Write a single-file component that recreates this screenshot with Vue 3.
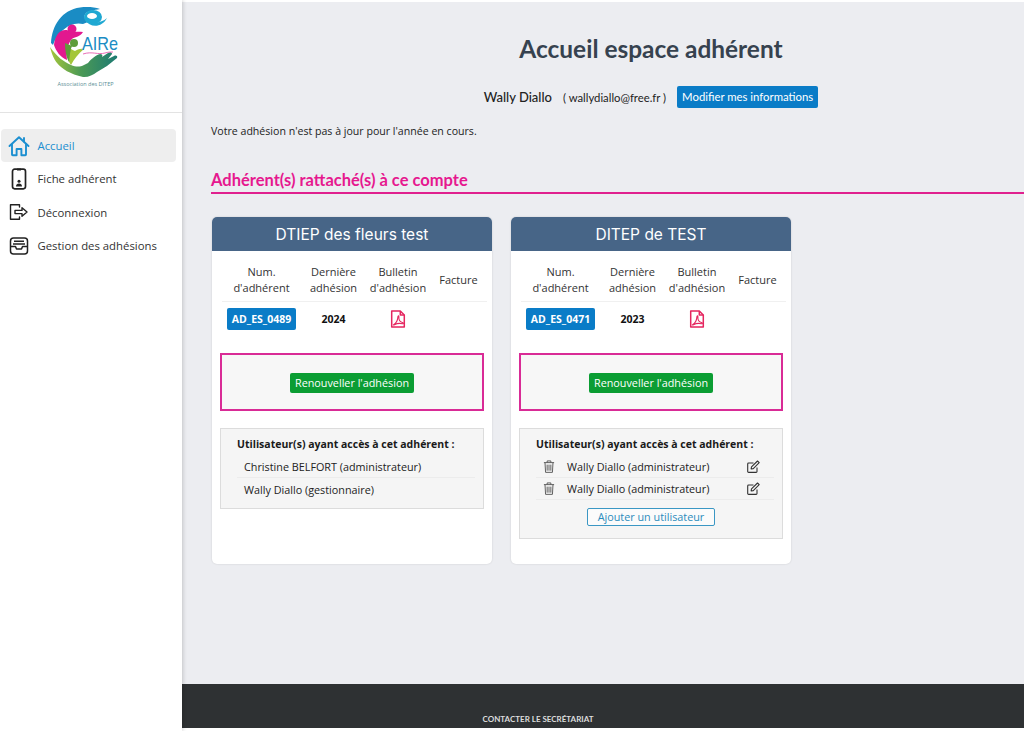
<script setup>
const menu = [
  { label: 'Accueil', icon: 'home', active: true },
  { label: 'Fiche adhérent', icon: 'phone' },
  { label: 'Déconnexion', icon: 'logout' },
  { label: 'Gestion des adhésions', icon: 'inbox' }
]

const cards = [
  {
    title: 'DTIEP des fleurs test',
    num: 'AD_ES_0489',
    year: '2024',
    editable: false,
    users: ['Christine BELFORT (administrateur)', 'Wally Diallo (gestionnaire)']
  },
  {
    title: 'DITEP de TEST',
    num: 'AD_ES_0471',
    year: '2023',
    editable: true,
    users: ['Wally Diallo (administrateur)', 'Wally Diallo (administrateur)']
  }
]
</script>

<template>
  <div class="page">
    <aside class="sidebar">
      <div class="logo-zone">
        <svg class="logo" width="78" height="75" viewBox="0 0 78 75">
          <defs>
            <linearGradient id="hand" x1="0" y1="0" x2="1" y2="0">
              <stop offset="0" stop-color="#a5c63b" />
              <stop offset="0.45" stop-color="#4c9a55" />
              <stop offset="1" stop-color="#1d7a72" />
            </linearGradient>
          </defs>
          <path d="M1 38C2 20 12 5 30 2.500C37 1.500 44 2 50 4C44 5 38 6 36 8C33 11 35 15 38 17L33 19C26 17 18 20 12 26C8 30 5 34 3 40Z" fill="#1a8cc4" />
          <ellipse cx="43" cy="12" rx="9" ry="7" fill="#1fa8d2" />
          <ellipse cx="42" cy="11" rx="5" ry="3" fill="#fff" />
          <path d="M35 15C40 23 52 23 57 13C52 18 42 19 35 15Z" fill="#1fa8d2" />
          <path d="M4 40C5 30 10 24 17 25C22 28 27 26 33 27C30 32 24 32 22 34C18 38 16 46 17 55C10 52 6 46 4 40Z" fill="#e2188f" />
          <circle cx="22" cy="24" r="4.500" fill="#e2188f" />
          <path d="M17 40C16 46 17 54 21 60C24 54 28 49 34 44C30 43 27 45 25 46C22 45 19 43 17 40Z" fill="#a4c639" />
          <path d="M15 38C15 44 16 52 19 57C20 50 20 45 22 41Z" fill="#5f9c3a" />
          <circle cx="24" cy="38" r="4" fill="#5f9c3a" />
          <path d="M0 42C2 50 4 54 7 58C12 64 20 69 33 72C38 72.500 43 70 47 67L57 61L67 53C68 51 66 50 64 51L58 54L62 49C62 47 60 47 58 48L52 52C53 50 52 49 50 49C46 50 41 54 38 58L34 60C30 62 26 62 21 60C14 57 7 52 0 42Z" fill="url(#hand)" />
          <path d="M33 49C42 46 48 50 55 48C58 47 60 47 63 47" fill="none" stroke="#e96fb7" stroke-width="1" />
          <text x="32" y="45" class="logo-txt" textLength="36" lengthAdjust="spacingAndGlyphs">AIRe</text>
        </svg>
        <div class="logo-sub">Association des DITEP</div>
      </div>
      <nav class="menu">
        <a v-for="item in menu" :key="item.label" class="menu-item" :class="{ active: item.active }">
          <span class="menu-icon">
            <svg v-if="item.icon === 'home'" width="22" height="22" viewBox="0 0 22 22" fill="none" stroke="currentColor" stroke-width="1.900" stroke-linejoin="round" stroke-linecap="round">
              <path d="M1.500 11 11 2.200 20.500 11" />
              <path d="M4 9.500V19.500c0 .4.300.7.700.7h3.900v-6.200h4.800v6.200h3.900c.4 0 .7-.3.700-.7V9.500" />
              <path d="M16 3v3.500" />
            </svg>
            <svg v-else-if="item.icon === 'phone'" width="20" height="22" viewBox="0 0 20 22" fill="none" stroke="#222" stroke-width="1.700">
              <rect x="3.500" y="1.200" width="13" height="19.600" rx="2.200" />
              <path d="M8 1.500h4" stroke-width="2" />
              <circle cx="10" cy="13.300" r="1.500" fill="#222" stroke="none" />
              <path d="M7 18.600c0-2 1.200-3.200 3-3.200s3 1.200 3 3.200z" fill="#222" stroke="none" />
            </svg>
            <svg v-else-if="item.icon === 'logout'" width="20" height="18" viewBox="0 0 20 18" fill="none" stroke="#222" stroke-width="1.400" stroke-linejoin="round" stroke-linecap="round">
              <path d="M10.500 4V1.800H1.500v14.400h9V14" />
              <path d="M6 7.400h7V4.700L18 9l-5 4.300v-2.700H6z" />
            </svg>
            <svg v-else width="20" height="18" viewBox="0 0 20 18" fill="none" stroke="#222" stroke-width="1.500" stroke-linejoin="round">
              <rect x="1.500" y="1" width="17" height="16" rx="3" />
              <path d="M1.500 9.500h5l1 2.500h5l1-2.500h5" />
              <path d="M5 4.300h10M4 7h12" />
            </svg>
          </span>
          <span>{{ item.label }}</span>
        </a>
      </nav>
    </aside>

    <div class="content">
      <main class="main">
        <h1 class="title">Accueil espace adhérent</h1>
        <div class="user-line">
          <span class="user-name">Wally Diallo</span>
          <span class="user-mail">( wallydiallo@free.fr )</span>
          <a class="btn-blue">Modifier mes informations</a>
        </div>
        <p class="notice">Votre adhésion n'est pas à jour pour l'année en cours.</p>
        <h2 class="section">Adhérent(s) rattaché(s) à ce compte</h2>

        <div class="cards">
          <section v-for="card in cards" :key="card.num" class="card">
            <header class="card-head">{{ card.title }}</header>
            <div class="card-body">
              <div class="table">
                <div class="cell th">Num.<br />d'adhérent</div>
                <div class="cell th">Dernière<br />adhésion</div>
                <div class="cell th">Bulletin<br />d'adhésion</div>
                <div class="cell th">Facture</div>
                <div class="cell td"><span class="badge">{{ card.num }}</span></div>
                <div class="cell td"><b class="year">{{ card.year }}</b></div>
                <div class="cell td">
                  <svg width="16" height="18" viewBox="0 0 16 18" fill="none" stroke="#e5265f" stroke-width="1.500" stroke-linejoin="round">
                    <path d="M1.700 1h8.600l4 4v12H1.700z" />
                    <path d="M10.300 1v4h4" />
                    <path d="M3.500 14.800c2.500-1.400 4.200-4.400 4.400-8 .1-1.400 1.200-1.100 1 .3-.3 2.800 1.500 5 4 5.600.9.300.5 1.300-.4 1-2.800-.6-5.300-.5-8 1-1 .5-1.500.3-1 .1z" stroke-width="1.100" />
                  </svg>
                </div>
                <div class="cell td"></div>
              </div>

              <div class="renew">
                <a class="btn-green">Renouveller l'adhésion</a>
              </div>

              <div class="users">
                <div class="users-title">Utilisateur(s) ayant accès à cet adhérent :</div>
                <div v-for="(u, i) in card.users" :key="i" class="user-row">
                  <svg v-if="card.editable" class="trash" width="12" height="13" viewBox="0 0 12 14" fill="none" stroke="#555" stroke-width="1">
                    <path d="M0.500 2.800h11M4 2.800V1h4v1.800" />
                    <path d="M1.700 2.800l.6 10.500h7.400l.6-10.500" />
                    <path d="M4 5v6.500M6 5v6.500M8 5v6.500" />
                  </svg>
                  <span class="user-label">{{ u }}</span>
                  <svg v-if="card.editable" class="edit" width="13" height="13" viewBox="0 0 13 13" fill="none" stroke="#333" stroke-width="1.100" stroke-linejoin="round">
                    <path d="M10 7.500V11.500c0 .5-.4.900-.9.900H1.600c-.5 0-.9-.4-.9-.9V3.900c0-.5.4-.9.900-.9H6.500" />
                    <path d="M4.500 6.800 10.500 1l1.700 1.700-5.900 5.900-2.200.4z" />
                  </svg>
                </div>
                <div v-if="card.editable" class="add-row">
                  <a class="btn-outline">Ajouter un utilisateur</a>
                </div>
              </div>
            </div>
          </section>
        </div>
      </main>
      <footer class="footer">
        <span class="footer-link">CONTACTER LE SECRÉTARIAT</span>
      </footer>
    </div>
  </div>
</template>

<style>
html, body {
  margin: 0;
  height: 100%;
  background: #fff;
  overflow: hidden;
}
</style>

<style scoped>
.page {
  display: flex;
  width: 1024px;
  height: 731px;
  font-family: "Open Sans", "Noto Sans", sans-serif;
  font-size: 11px;
  color: #222;
  overflow: hidden;
}

.sidebar {
  width: 182px;
  flex-shrink: 0;
  background: #fff;
  box-shadow: 1px 0 4px rgba(0, 0, 0, 0.18);
  position: relative;
}

.logo-zone {
  height: 113px;
  border-bottom: 1px solid #e3e3e3;
  display: flex;
  flex-direction: column;
  align-items: center;
  padding: 5px 4px 0 0;
  box-sizing: border-box;
}

.logo-txt {
  font-family: "Liberation Sans", sans-serif;
  font-size: 19px;
  fill: #1a8cc4;
}

.logo-sub {
  font-size: 5.500px;
  color: #5d8f97;
  margin-right: 7px;
}

.menu {
  padding: 16px 6px 0 1px;
}

.menu-item {
  display: flex;
  align-items: center;
  height: 33.300px;
  border-radius: 4px;
  font-size: 11.350px;
  color: #333;
}

.menu-item.active {
  background: #eeeeee;
  color: #1c8fd0;
}

.menu-icon {
  width: 36.500px;
  display: flex;
  justify-content: center;
  color: #1c8fd0;
}

.content {
  flex: 1;
  display: flex;
  flex-direction: column;
  margin-top: 2px;
  height: 726px;
  min-width: 0;
}

.main {
  flex: 1;
  background: #ecedf1;
  padding: 0 0 0 29px;
}

.title {
  margin: 32px 0 0;
  text-align: center;
  font-family: "Lato", sans-serif;
  font-size: 24.450px;
  line-height: 30px;
  font-weight: 700;
  color: #36424f;
  padding-left: 67px;
}

.user-line {
  display: flex;
  align-items: center;
  justify-content: center;
  margin-top: 22px;
  height: 22px;
  padding-left: 67px;
}

.user-name {
  font-family: "Lato", sans-serif;
  font-size: 13px;
  font-weight: 500;
  margin-right: 11px;
}

.user-mail {
  font-family: "Lato", sans-serif;
  font-size: 11.300px;
  margin-right: 11px;
}

.btn-blue {
  background: #0a7cc7;
  color: #fff;
  border-radius: 2px;
  font-size: 11.350px;
  height: 22px;
  line-height: 22px;
  padding: 0 5px;
  font-family: "Lato", sans-serif;
}

.notice {
  margin: 16px 0 0;
  font-size: 10.600px;
  line-height: 14px;
}

.section {
  margin: 31px 0 0;
  font-family: "Lato", sans-serif;
  font-size: 16.500px;
  line-height: 22px;
  font-weight: 700;
  color: #e6188f;
  border-bottom: 2px solid #e0218f;
  padding-bottom: 1px;
}

.cards {
  display: flex;
  align-items: flex-start;
  gap: 19px;
  margin-top: 23px;
  padding-left: 1px;
}

.card {
  width: 280px;
  height: 347px;
  background: #fff;
  border-radius: 5px;
  box-shadow: 0 0 2px rgba(0, 0, 0, 0.15);
  overflow: hidden;
}

.card-head {
  height: 34px;
  line-height: 36px;
  background: #476587;
  color: #fff;
  text-align: center;
  font-family: "Inter", sans-serif;
  font-size: 15.500px;
}

.card-body {
  padding: 0 8px;
}

.table {
  display: grid;
  grid-template-columns: 79px 65px 64px 57px;
  margin-left: 2px;
}

.cell {
  display: flex;
  align-items: center;
  justify-content: center;
  text-align: center;
}

.th {
  height: 51px;
  padding-top: 8px;
  box-sizing: border-box;
  border-bottom: 1px solid #f0f0f0;
  font-size: 11px;
  line-height: 16px;
  color: #333;
}

.td {
  height: 35px;
  padding-bottom: 2px;
  box-sizing: border-box;
}

.badge {
  background: #0a7cc7;
  color: #fff;
  font-weight: 700;
  font-size: 10.500px;
  padding: 0 5px;
  height: 22px;
  line-height: 22px;
  border-radius: 2px;
}

.year {
  font-size: 10.500px;
  color: #111;
}

.renew {
  margin-top: 16px;
  height: 58px;
  padding-top: 1px;
  border: 2px solid #d92b96;
  box-sizing: border-box;
  background: #f7f7f7;
  display: flex;
  align-items: center;
  justify-content: center;
}

.btn-green {
  background: #0b9d33;
  color: #fff;
  font-size: 10.800px;
  font-weight: 500;
  height: 20px;
  line-height: 20px;
  padding: 0 5px;
  border-radius: 2px;
}

.users {
  margin-top: 17px;
  background: #f5f5f5;
  border: 1px solid #dcdcdc;
  padding: 7px 8px 8px 16px;
  font-size: 10.800px;
}

.users-title {
  font-weight: 700;
  font-size: 10.500px;
  line-height: 17px;
  color: #1a1a1a;
  margin-bottom: 3px;
}

.user-row {
  display: flex;
  align-items: center;
  height: 22px;
  box-sizing: border-box;
  padding-left: 7px;
  border-bottom: 1px solid #ececec;
}

.user-row:last-of-type {
  border-bottom: 0;
}

.trash {
  margin-right: 12px;
}

.user-label {
  flex: 1;
}

.edit {
  margin-right: 14px;
}

.add-row {
  display: flex;
  justify-content: center;
  margin: 8px 0 4px;
  padding-right: 8px;
}

.btn-outline {
  border: 1px solid #3b97c4;
  border-radius: 2px;
  color: #2b8cbc;
  height: 16px;
  line-height: 16px;
  padding: 0 9.500px;
  font-size: 10.800px;
  background: #fbfbfb;
}

.footer {
  height: 44px;
  background: #2e3133;
  display: flex;
  align-items: flex-end;
  justify-content: center;
  padding: 0 130px 4px 0;
  box-sizing: border-box;
}

.footer-link {
  font-family: "Lato", sans-serif;
  font-weight: 700;
  font-size: 8px;
  color: #ddd;
}
</style>
